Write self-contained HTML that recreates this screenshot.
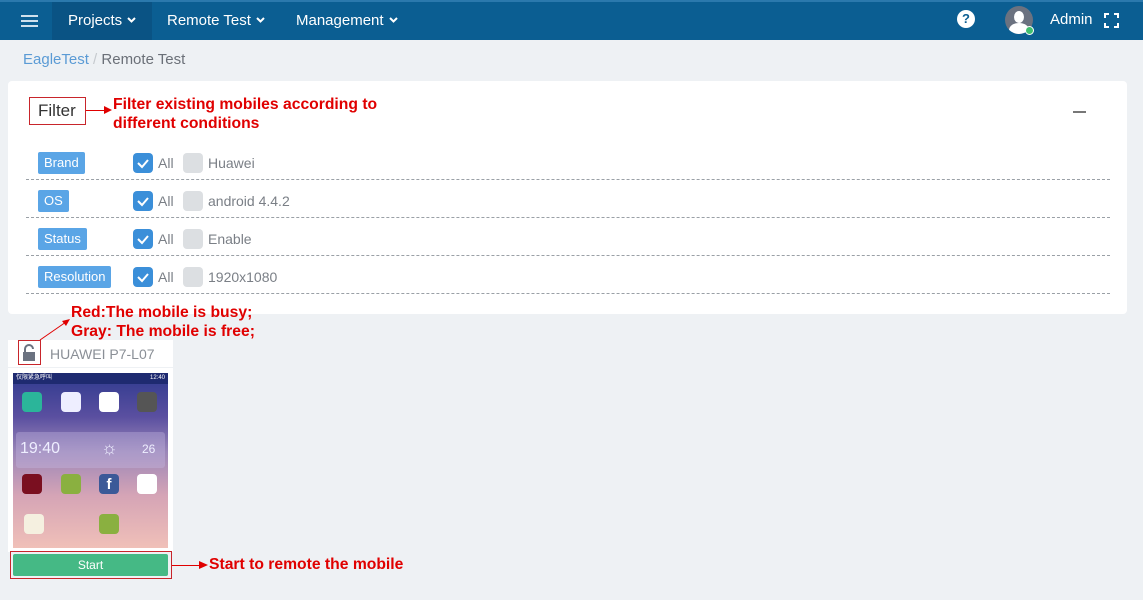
<!DOCTYPE html>
<html><head><meta charset="utf-8"><style>
*{margin:0;padding:0;box-sizing:border-box}
body{width:1143px;height:600px;background:#eef1f4;font-family:"Liberation Sans","Noto Sans CJK SC",sans-serif;position:relative;overflow:hidden}
.abs{position:absolute}
.nav{left:0;top:0;width:1143px;height:40px;background:#0b5e92;border-top:2px solid #2b79ad}
.nav span{position:absolute;color:#fff;font-size:15px;top:10px}
.nav span svg{margin-left:5px;vertical-align:2px}
.red{color:#e00000;font-weight:bold;font-size:15.7px;position:absolute}
.rbox{position:absolute;border:1px solid #c8252b}
.lbl{position:absolute;left:38px;height:22px;background:#5aa5e6;color:#fff;font-size:13px;line-height:22px;padding:0 6px;border-radius:2px}
.cb{position:absolute;width:20px;height:20px;border-radius:4px}
.on{background:#3b8fd9}
.off{background:#dcdfe2}
.t{position:absolute;color:#7a7f86;font-size:14px}
.dash{position:absolute;left:26px;width:1084px;border-top:1px dashed #9aa0a6}
.ic{position:absolute;width:20px;height:20px;border-radius:4px}
</style></head><body>
<div class="abs nav">
 <div class="abs" style="left:52px;top:0;width:100px;height:38px;background:#0a5384"></div>
 <div class="abs" style="left:21px;top:13px;width:17px;height:2px;background:#cfe0ec;box-shadow:0 5px 0 #cfe0ec,0 10px 0 #cfe0ec"></div>
 <span style="left:68px">Projects<svg width="9" height="6"><path d="M1 1l3.5 3.5L8 1" stroke="#fff" stroke-width="2" fill="none"/></svg></span>
 <span style="left:167px">Remote Test<svg width="9" height="6"><path d="M1 1l3.5 3.5L8 1" stroke="#fff" stroke-width="2" fill="none"/></svg></span>
 <span style="left:296px">Management<svg width="9" height="6"><path d="M1 1l3.5 3.5L8 1" stroke="#fff" stroke-width="2" fill="none"/></svg></span>
 <div class="abs" style="left:957px;top:8px;width:18px;height:18px;border-radius:50%;background:#fff;color:#0b5e92;font-weight:bold;font-size:13px;text-align:center;line-height:18px">?</div>
 <div class="abs" style="left:1005px;top:4px;width:28px;height:28px;border-radius:50%;background:#6b7280;overflow:hidden"><div class="abs" style="left:9px;top:5px;width:10px;height:12px;border-radius:50%;background:#fff"></div><div class="abs" style="left:4px;top:17px;width:20px;height:14px;border-radius:50%;background:#fff"></div></div>
 <div class="abs" style="left:1025px;top:24px;width:9px;height:9px;border-radius:50%;background:#3fbf6f;border:1.5px solid #fff"></div>
 <span style="left:1050px;top:9px">Admin</span>
 <svg class="abs" style="left:1104px;top:11px" width="15" height="15" viewBox="0 0 15 15" fill="none" stroke="#fff" stroke-width="2"><path d="M1 5V1h4M10 1h4v4M14 10v4h-4M5 14H1v-4"/></svg>
</div>
<div class="abs" style="left:23px;top:51px;font-size:15px;color:#5b9bd5">EagleTest <span style="color:#c5c9ce">/</span> <span style="color:#6b7078">Remote Test</span></div>
<div class="abs" style="left:8px;top:81px;width:1119px;height:233px;background:#fff;border-radius:4px"></div>
<div class="rbox" style="left:29px;top:97px;width:57px;height:28px"></div>
<div class="abs" style="left:38px;top:101px;font-size:17px;color:#333">Filter</div>
<div class="abs" style="left:86px;top:110px;width:20px;border-top:1px solid #e00000"></div>
<div class="abs" style="left:104px;top:106px;border-left:8px solid #e00000;border-top:4px solid transparent;border-bottom:4px solid transparent"></div>
<div class="red" style="left:113px;top:95px;line-height:19px">Filter existing mobiles according to<br>different conditions</div>
<div class="abs" style="left:1073px;top:111px;width:13px;height:2px;background:#777"></div>

<div class="lbl" style="top:152px">Brand</div>
<div class="lbl" style="top:190px">OS</div>
<div class="lbl" style="top:228px">Status</div>
<div class="lbl" style="top:266px">Resolution</div>
<div class="dash" style="top:179px"></div><div class="dash" style="top:217px"></div><div class="dash" style="top:255px"></div><div class="dash" style="top:293px"></div>

<div class="cb on" style="left:133px;top:153px"></div><div class="cb on" style="left:133px;top:191px"></div><div class="cb on" style="left:133px;top:229px"></div><div class="cb on" style="left:133px;top:267px"></div>
<svg class="abs" style="left:133px;top:153px" width="20" height="134"><g fill="none" stroke="#fff" stroke-width="2"><path d="M5 10l4 4 6-7"/><path d="M5 48l4 4 6-7"/><path d="M5 86l4 4 6-7"/><path d="M5 124l4 4 6-7"/></g></svg>
<div class="t" style="left:158px;top:155px">All</div><div class="t" style="left:158px;top:193px">All</div><div class="t" style="left:158px;top:231px">All</div><div class="t" style="left:158px;top:269px">All</div>
<div class="cb off" style="left:183px;top:153px"></div><div class="cb off" style="left:183px;top:191px"></div><div class="cb off" style="left:183px;top:229px"></div><div class="cb off" style="left:183px;top:267px"></div>
<div class="t" style="left:208px;top:155px">Huawei</div><div class="t" style="left:208px;top:193px">android 4.4.2</div><div class="t" style="left:208px;top:231px">Enable</div><div class="t" style="left:208px;top:269px">1920x1080</div>

<div class="red" style="left:71px;top:303px;line-height:19px">Red:The mobile is busy;<br>Gray: The mobile is free;</div>
<svg class="abs" style="left:38px;top:318px" width="34" height="24"><path d="M2 22L28 4" stroke="#e00000" stroke-width="1"/><path d="M32 1l-8 2 4 5z" fill="#e00000"/></svg>

<div class="abs" style="left:8px;top:340px;width:165px;height:27px;background:#fff"></div>
<div class="rbox" style="left:18px;top:340px;width:23px;height:25px"></div>
<svg class="abs" style="left:21px;top:344px" width="16" height="18"><path d="M4 8V5a4 4 0 0 1 8 0" fill="none" stroke="#6b7280" stroke-width="2"/><rect x="2" y="8" width="12" height="9" fill="#6b7280"/></svg>
<div class="abs" style="left:50px;top:346px;font-size:14px;color:#8a8f96">HUAWEI P7-L07</div>
<div class="abs" style="left:8px;top:368px;width:165px;height:184px;background:#fff"></div>
<div class="abs" style="left:13px;top:373px;width:155px;height:175px;background:linear-gradient(#2e3a8e 0%,#5a4fa0 25%,#9a86b8 45%,#d5a4b6 70%,#f0c0b8 100%)">
 <div class="abs" style="left:0;top:0;width:155px;height:11px;background:#1e2a70;font-size:6px;color:#fff;padding-left:3px;line-height:11px">仅限紧急呼叫 <span style="float:right;padding-right:3px">12:40</span></div>
 <div class="ic" style="left:9px;top:19px;background:#2bb59a"></div><div class="ic" style="left:48px;top:19px;background:#eef"></div><div class="ic" style="left:86px;top:19px;background:#fff"></div><div class="ic" style="left:124px;top:19px;background:#555"></div>
 <div class="abs" style="left:3px;top:59px;width:149px;height:36px;background:rgba(200,190,230,.35);border-radius:3px;color:#eef;font-size:16px;padding:8px 0 0 4px">19:40<span style="position:absolute;left:126px;top:10px;font-size:12px">26</span><span style="position:absolute;left:85px;top:6px;font-size:18px">☼</span></div>
 <div class="ic" style="left:9px;top:101px;background:#7a0f20"></div><div class="ic" style="left:48px;top:101px;background:#8ab040"></div><div class="ic" style="left:86px;top:101px;background:#3b5998;color:#fff;font-weight:bold;text-align:center;font-size:15px;line-height:22px">f</div><div class="ic" style="left:124px;top:101px;background:#fff"></div>
 <div class="ic" style="left:11px;top:141px;background:#f5f0e0"></div><div class="ic" style="left:86px;top:141px;background:#8ab040"></div>
</div>
<div class="rbox" style="left:10px;top:551px;width:162px;height:28px"></div>
<div class="abs" style="left:13px;top:554px;width:155px;height:22px;background:#45b985;border-radius:2px;color:#fff;font-size:12px;text-align:center;line-height:22px">Start</div>
<div class="abs" style="left:172px;top:565px;width:30px;border-top:1px solid #e00000"></div>
<div class="abs" style="left:199px;top:561px;border-left:9px solid #e00000;border-top:4px solid transparent;border-bottom:4px solid transparent"></div>
<div class="red" style="left:209px;top:556px">Start to remote the mobile</div>
</body></html>
